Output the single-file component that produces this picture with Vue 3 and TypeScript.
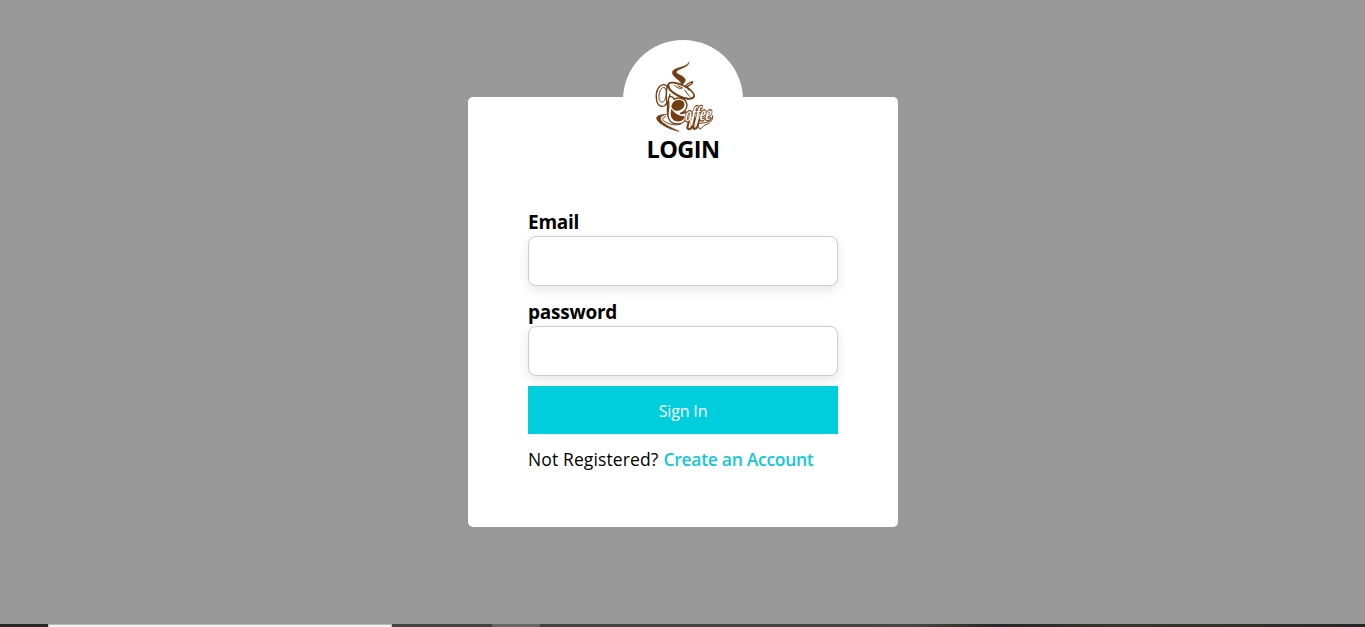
<script setup lang="ts">
import { ref } from 'vue'

const email = ref('')
const password = ref('')
</script>

<template>
  <div class="screen">
    <main class="backdrop">
      <form class="card" @submit.prevent>
        <div class="badge">
          <svg class="logo" viewBox="0 0 240 240" fill="none" stroke="#743d13" stroke-linecap="round" stroke-linejoin="round" aria-label="Coffee">
            <path d="M132 22C131 40 96 41 94 51C93 58 121 63 121 75C121 84 112 86 109 92C110 79 100 76 92 68C84 61 79 53 84 47C94 36 124 38 132 22Z" fill="#743d13" stroke-width="1.5" />
            <path d="M143 80C143 90 129 90 126 97L131 104M143 80C133 83 122 89 122 97" stroke-width="4" />
            <ellipse cx="108" cy="107" rx="43" ry="17" transform="rotate(26 108 107)" stroke-width="5" />
            <path d="M71 91C69 104 89 119 109 127C124 133 140 133 146 126" stroke-width="5" />
            <path d="M89 91C95 100 104 99 109 101M98 92L113 99M119 105L133 124" stroke-width="3" />
            <path d="M67 97C62 85 48 86 39 101C29 120 34 148 46 153C55 156 63 151 65 143" stroke-width="4" />
            <path d="M60 99C51 91 40 111 42 130C44 142 53 145 58 137C66 124 66 106 60 99Z" stroke-width="3" />
            <path d="M66 97C62 122 65 149 71 166M75 118C66 145 65 174 71 187" stroke-width="4" />
            <path d="M64 178C31 180 26 190 49 207C66 219 85 226 102 229C82 219 62 211 51 200C42 190 47 182 64 178Z" fill="#743d13" stroke-width="2" />
            <path d="M62 185C48 189 52 197 65 203C78 210 94 211 106 208" stroke-width="3" />
            <path d="M71 138C68 122 83 121 87 133C105 123 125 134 126 151C126 162 116 173 106 175C113 177 118 174 123 170L126 186C119 204 104 209 91 206C73 203 65 185 70 165C73 156 71 147 71 138Z" fill="white" stroke-width="4" />
            <ellipse cx="99" cy="151" rx="20" ry="16" transform="rotate(-20 99 151)" fill="#743d13" stroke="none" />
            <path d="M79 162C87 172 95 180 107 182C115 184 120 181 118 189C111 202 92 203 83 193C76 185 76 171 79 162Z" fill="#743d13" stroke="none" />
            <path d="M158 208C164 202 177 206 188 201C197 196 203 190 203 182C204 198 193 206 180 210C173 212 173 219 166 222Z" fill="white" stroke-width="3" />
            <path d="M136 188L128 216C127 224 137 224 139 216L147 184M153 190L145 215C145 223 154 222 156 215L164 184" stroke-width="8" />
            <g transform="translate(119 199) rotate(-3) skewX(-9)">
              <text class="lettering" x="0" y="0" textLength="79" lengthAdjust="spacingAndGlyphs">offee</text>
            </g>
            <path d="M139 188L132 216C131 220 135 220 136 215L146 180M156 188L149 214C148 218 152 218 153 213L163 180" stroke="white" stroke-width="3" />
          </svg>
        </div>
        <h1>LOGIN</h1>
        <div class="fields">
          <label for="email" class="email-label">Email</label>
          <input id="email" v-model="email" type="text" />
          <label for="password" class="password-label">password</label>
          <input id="password" v-model="password" type="password" />
          <button type="submit"><span>Sign In</span></button>
          <p><span class="question">Not Registered?</span><a href="#">Create an Account</a></p>
        </div>
      </form>
    </main>
    <footer class="taskbar">
      <div class="start"></div>
      <div class="search"></div>
      <div class="apps"></div>
      <div class="active-app"></div>
      <div class="tray"></div>
    </footer>
  </div>
</template>

<style>
body {
  margin: 0;
  overflow: hidden;
}
</style>

<style scoped>
* {
  box-sizing: border-box;
}

.screen {
  width: 100%;
  height: 627px;
  display: flex;
  flex-direction: column;
  background: #999;
  color: #000;
  font-family: "Segoe UI", "Open Sans", "Noto Sans", sans-serif;
}

.backdrop {
  height: 624px;
  padding: 97px 0 0 468px;
}

.card {
  width: 430px;
  height: 430px;
  border-radius: 5px;
  background: white;
  display: flex;
  flex-direction: column;
  align-items: center;
}

.badge {
  width: 120px;
  height: 120px;
  margin-top: -57px;
  padding: 15px 0 0 22px;
  border-radius: 50%;
  background: white;
  flex: none;
}

.logo {
  display: block;
  width: 80px;
  height: 80px;
  overflow: visible;
}

.lettering {
  font: italic 700 62px "Liberation Serif", serif;
  fill: white;
  stroke: #743d13;
  stroke-width: 7px;
  paint-order: stroke;
}

h1 {
  margin: -28px 0 0;
  height: 34px;
  font-size: 23.5px;
  line-height: 34px;
  font-weight: 700;
  letter-spacing: -0.55px;
}

.fields {
  width: 310px;
  margin-top: 42px;
  display: flex;
  flex-direction: column;
}

label {
  height: 28px;
  font-size: 19px;
  line-height: 28px;
  font-weight: 700;
  letter-spacing: -0.25px;
  white-space: nowrap;
}

.password-label {
  margin-top: 12px;
}

input {
  width: 310px;
  height: 50px;
  padding: 0 14px;
  border: 1px solid #ccc;
  border-radius: 8px;
  outline: 0;
  background: white;
  box-shadow: 0 4px 12px rgba(0, 0, 0, 0.1);
  font: inherit;
}

button {
  height: 48px;
  margin-top: 10px;
  padding: 1px 0 0;
  border: 0;
  background: #00cedc;
  color: white;
  font: 400 16px "Segoe UI", "Open Sans", "Noto Sans", sans-serif;
  letter-spacing: -0.15px;
}

p {
  display: flex;
  gap: 5px;
  margin: 12px 0 0;
  font-size: 17.5px;
  line-height: 26px;
  font-weight: 500;
  white-space: nowrap;
}

.question {
  width: 130.5px;
  letter-spacing: 0.12px;
}

a {
  color: #15c8d5;
  font-weight: 600;
  letter-spacing: -0.3px;
  text-decoration: none;
}

.taskbar {
  height: 3px;
  display: flex;
}

.start {
  width: 48px;
  background: #272727;
}

.search {
  width: 344px;
  border: solid #b9b9b9;
  border-width: 1px 1px 0;
  background: #f2f2f2;
}

.apps {
  width: 100px;
  background: #434343;
}

.active-app {
  width: 48px;
  background: #666;
}

.tray {
  flex: 1;
  background: linear-gradient(90deg, #434343 0 40%, #474747 45%, #353530 51%, #272528 56%, #35352d 70%, #30302a 84%, #252527 100%);
  border-right: 4px solid #242424;
}
</style>
